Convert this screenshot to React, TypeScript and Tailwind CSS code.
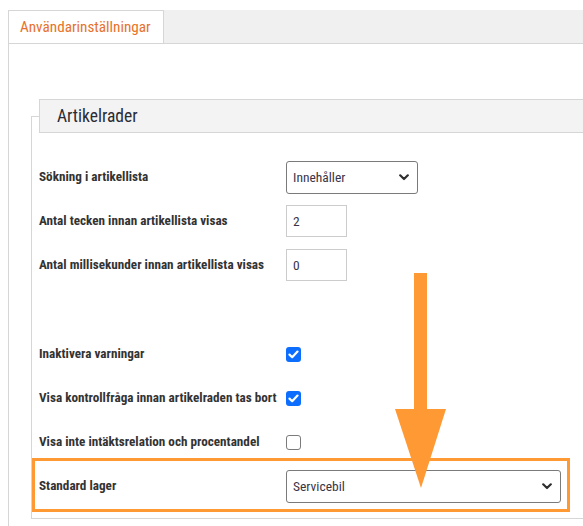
import React from "react";

const Chevron = () => (
  <svg width="10" height="7" viewBox="0 0 10 7" className="shrink-0">
    <path d="M1.2 1.3 L5 5 L8.8 1.3" fill="none" stroke="#2f2f2f" strokeWidth="2.2" strokeLinecap="round" strokeLinejoin="round" />
  </svg>
);

function Select({ value, width }: { value: string; width: string }) {
  return (
    <div
      className={`flex h-[33px] ${width} items-center justify-between rounded-[3px] border border-[#7a7a7a] bg-white pl-[6px] pr-[8px] text-[13.5px] text-[#3a3546]`}
    >
      <span>{value}</span>
      <Chevron />
    </div>
  );
}

function TextInput({ value }: { value: string }) {
  return (
    <div className="flex h-[32px] w-[61px] items-center border border-[#cccccc] bg-white pl-[6px] text-[13.5px] text-[#3a3546]">
      {value}
    </div>
  );
}

function Checkbox({ checked }: { checked: boolean }) {
  if (!checked) {
    return <div className="h-[15px] w-[15px] rounded-[3px] border border-[#7b7b7b] bg-white" />;
  }
  return (
    <div className="flex h-[15px] w-[15px] items-center justify-center rounded-[3px] bg-[#0d6efd]">
      <svg width="11" height="9" viewBox="0 0 11 9">
        <path d="M1.5 4.6 L4.2 7.2 L9.5 1.6" fill="none" stroke="#ffffff" strokeWidth="2.2" strokeLinecap="round" strokeLinejoin="round" />
      </svg>
    </div>
  );
}

function Row({ label, children }: { label: string; children: React.ReactNode }) {
  return (
    <div className="grid h-[44px] grid-cols-[247px_1fr] items-center pl-[7px]">
      <div className="text-[13.2px] font-bold text-[#333333]">{label}</div>
      <div className="flex items-center">{children}</div>
    </div>
  );
}

export default function App() {
  return (
    <div className="relative h-[526px] w-[583px] overflow-hidden bg-white font-['Roboto',sans-serif] [font-stretch:condensed]">
      <div className="pl-[8px] pt-[10px]">
        {/* tab strip */}
        <div className="flex h-[34px] border-b border-[#d6d6d6] bg-[#f0f0f0]">
          <div className="flex w-[156px] items-center border-x border-t border-[#d6d6d6] bg-white pl-[11px] text-[15.2px] text-[#e8712b]">
            Användarinställningar
          </div>
        </div>

        {/* panel */}
        <div className="h-[483px] border-l border-[#d6d6d6] pl-[22px] pt-[72px]">
          <div className="w-[580px] border-y border-l border-[#d6d6d6] pb-[10px]">
            <div className="-mt-[18px] ml-[7px] flex h-[34px] items-center border border-[#d6d6d6] bg-[#f3f3f3] pl-[17px] text-[17.5px] text-[#2b2b33]">
              Artikelrader
            </div>

            <div className="mt-[22px]">
              <Row label="Sökning i artikellista">
                <Select value="Innehåller" width="w-[132px]" />
              </Row>
              <Row label="Antal tecken innan artikellista visas">
                <TextInput value="2" />
              </Row>
              <Row label="Antal millisekunder innan artikellista visas">
                <TextInput value="0" />
              </Row>
            </div>

            <div className="mt-[45px]">
              <Row label="Inaktivera varningar">
                <Checkbox checked />
              </Row>
              <Row label="Visa kontrollfråga innan artikelraden tas bort">
                <Checkbox checked />
              </Row>
              <Row label="Visa inte intäktsrelation och procentandel">
                <Checkbox checked={false} />
              </Row>
              <Row label="Standard lager">
                <Select value="Servicebil" width="w-[275px]" />
              </Row>
            </div>
          </div>
        </div>
      </div>

      {/* annotation: highlight box */}
      <div className="absolute left-[32px] top-[458px] h-[54px] w-[538px] border-[3px] border-[#ff9933]" />

      {/* annotation: arrow */}
      <svg className="absolute left-[395px] top-[273px]" width="52" height="216" viewBox="0 0 52 216">
        <rect x="19" y="0" width="13" height="138" fill="#ff9933" />
        <polygon points="0,136 51,136 26,215" fill="#ff9933" />
      </svg>
    </div>
  );
}
